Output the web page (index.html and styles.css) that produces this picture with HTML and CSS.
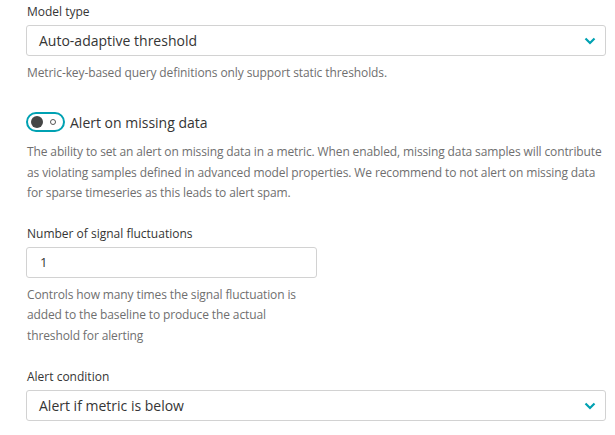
FILE: index.html
```html
<!DOCTYPE html>
<html>
<head>
<meta charset="utf-8">
<link rel="stylesheet" href="styles.css">
</head>
<body>
<div class="form">
  <div class="field">
    <label class="label">Model type</label>
    <div class="select">
      <span class="select-value">Auto-adaptive threshold</span>
      <svg class="chevron" width="12" height="8" viewBox="0 0 12 8"><path d="M1.5 1.5 L6 6 L10.5 1.5" fill="none" stroke="#00a1b2" stroke-width="2.2"/></svg>
    </div>
    <p class="hint">Metric-key-based query definitions only support static thresholds.</p>
  </div>

  <div class="toggle-field">
    <div class="toggle-row">
      <span class="toggle"><span class="knob"></span><span class="ring"></span></span>
      <span class="toggle-label">Alert on missing data</span>
    </div>
    <p class="desc">The ability to set an alert on missing data in a metric. When enabled, missing data samples will contribute as violating samples defined in advanced model properties. We recommend to not alert on missing data for sparse timeseries as this leads to alert spam.</p>
  </div>

  <div class="field narrow">
    <label class="label">Number of signal fluctuations</label>
    <div class="input"><span class="select-value small">1</span></div>
    <p class="desc">Controls how many times the signal fluctuation is added to the baseline to produce the actual threshold for alerting</p>
  </div>

  <div class="field">
    <label class="label">Alert condition</label>
    <div class="select">
      <span class="select-value">Alert if metric is below</span>
      <svg class="chevron" width="12" height="8" viewBox="0 0 12 8"><path d="M1.5 1.5 L6 6 L10.5 1.5" fill="none" stroke="#00a1b2" stroke-width="2.2"/></svg>
    </div>
  </div>
</div>
</body>
</html>
```
FILE: styles.css
```css
html, body {
  margin: 0;
  padding: 0;
  background: #ffffff;
}
body {
  font-family: "Open Sans", "Noto Sans", sans-serif;
  color: #454646;
}
.form {
  padding: 3px 9px 0 26px;
  display: flex;
  flex-direction: column;
}
.label {
  display: block;
  font-size: 12px;
  line-height: 18px;
  color: #353535;
  margin-bottom: 4px;
  padding-left: 1px;
}
.select, .input {
  height: 29px;
  border: 1px solid #d2d2d2;
  border-radius: 3px;
  display: flex;
  align-items: center;
  justify-content: space-between;
  padding: 0 9px 0 12px;
  background: #fff;
}
.input {
  width: 267px;
  padding-left: 13px;
}
.select-value {
  font-size: 14px;
  color: #353535;
}
.select-value.small {
  font-size: 13px;
}
.chevron {
  display: block;
}
.hint {
  margin: 7px 0 0 1px;
  font-size: 12px;
  line-height: 20px;
  color: #6f6f6f;
  letter-spacing: -0.1px;
}
.toggle-field {
  margin-top: 29px;
}
.toggle-row {
  display: flex;
  align-items: center;
  gap: 5px;
}
.toggle {
  box-sizing: border-box;
  width: 39px;
  height: 20px;
  border: 2px solid #00a1b2;
  border-radius: 10px;
  display: flex;
  align-items: center;
  padding-left: 3px;
  gap: 7px;
}
.knob {
  width: 12px;
  height: 12px;
  border-radius: 50%;
  background: #454646;
}
.ring {
  box-sizing: border-box;
  width: 6px;
  height: 6px;
  border-radius: 50%;
  border: 1.5px solid #555;
}
.toggle-label {
  font-size: 14px;
  color: #353535;
}
.desc {
  margin: 10px 0 0 1px;
  font-size: 12px;
  line-height: 20.5px;
  color: #6f6f6f;
  letter-spacing: -0.12px;
}
.field.narrow {
  margin-top: 21px;
}
.field.narrow .desc {
  width: 290px;
  margin-top: 7px;
}
.field.narrow + .field {
  margin-top: 22px;
}
```
